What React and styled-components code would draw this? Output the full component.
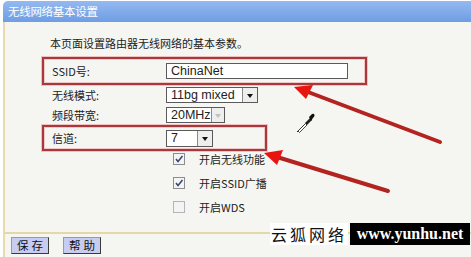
import React from "react";
import styled, { createGlobalStyle } from "styled-components";

const Global = createGlobalStyle`
  html, body { margin: 0; padding: 0; background: #ffffff; }
  body { font-family: "Noto Sans CJK SC", "Noto Sans", sans-serif; }
  * { box-sizing: border-box; }
`;

const Page = styled.div`
  position: relative;
  width: 471px;
  height: 257px;
  overflow: hidden;
  display: flex;
  flex-direction: column;
  background: #ffffff;
`;

const TitleBar = styled.div`
  height: 21px;
  margin: 1px 0 0 3px;
  border-radius: 5px 0 0 0;
  background: linear-gradient(#93b9f0, #6f9de4);
  color: #ffffff;
  font-size: 11.5px;
  line-height: 21px;
  padding-left: 5px;
  letter-spacing: -0.3px;
`;

const Body = styled.div`
  flex: 1;
  margin-left: 3px;
  border-left: 2px solid #e6dcae;
  background: #f5f5f2;
  display: flex;
  flex-direction: column;
  padding: 14px 0 0 37px;
`;

const Description = styled.div`
  font-size: 11px;
  line-height: 14px;
  color: #222;
  padding-left: 8px;
  margin-bottom: 7px;
`;

const Row = styled.div`
  display: flex;
  align-items: center;
  height: ${(p) => p.$h}px;
  width: ${(p) => (p.$w ? `${p.$w}px` : "auto")};
  padding-left: ${(p) => (p.$boxed ? 8 : 10)}px;
  border: ${(p) => (p.$boxed ? "2px solid #a8383c" : "none")};
  box-shadow: ${(p) => (p.$boxed ? "0 0 0 1px #efc2c2, inset 0 0 0 1px #efc8c8" : "none")};
`;

const Label = styled.div`
  width: 114px;
  font-size: 11px;
  color: #222;
  flex-shrink: 0;
`;

const TextInput = styled.input`
  width: 182px;
  height: 16px;
  border: 1px solid #5a5a5a;
  background: #fff;
  padding: 0 0 0 4px;
  font-family: "Liberation Sans", Arial, sans-serif;
  font-size: 12.5px;
  color: #222;
  outline: none;
`;

const Select = styled.div`
  display: flex;
  align-items: stretch;
  width: ${(p) => p.$w}px;
  height: ${(p) => p.$h || 16}px;
  border: 1px solid #5a5a5a;
  background: #fff;
`;

const SelectText = styled.div`
  flex: 1;
  padding-left: 4px;
  font-family: "Liberation Sans", Arial, sans-serif;
  font-size: 12.5px;
  line-height: ${(p) => p.$h - 2}px;
  color: #222;
  white-space: nowrap;
`;

const SelectButton = styled.div`
  width: 15px;
  display: flex;
  align-items: center;
  justify-content: center;
  border-left: 1px solid #8a8a8a;
  background: #eeeeec;
  &::after {
    content: "";
    border-left: 3.5px solid transparent;
    border-right: 3.5px solid transparent;
    border-top: 4px solid ${(p) => (p.$disabled ? "#c0c0c0" : "#111")};
    margin-top: 2px;
  }
`;

const Checks = styled.div`
  display: flex;
  flex-direction: column;
  gap: 10px;
  padding-left: 131px;
  margin-top: 1px;
`;

const CheckRow = styled.div`
  display: flex;
  align-items: center;
  height: 14px;
  gap: 14px;
  font-size: 11px;
  color: #222;
`;

const Box = styled.div`
  width: 12px;
  height: 12px;
  border: 1px solid ${(p) => (p.$checked ? "#8d8d8d" : "#b5b5b5")};
  background: #f4f4f4;
  display: flex;
  align-items: center;
  justify-content: center;
`;

const Footer = styled.div`
  height: 25px;
  margin-left: 3px;
  border-left: 2px solid #e6dcae;
  border-top: 2px solid #e3d8a6;
  background: #f5f5f2;
  display: flex;
  align-items: center;
  gap: 14px;
  padding-left: 6px;
`;

const Button = styled.div`
  width: 38px;
  height: 17px;
  background: #c6cdf1;
  border: 1px solid #3a3a3a;
  border-top-color: #9a9a9a;
  border-left-color: #9a9a9a;
  font-size: 11.5px;
  line-height: 15px;
  text-align: center;
  letter-spacing: 3px;
  padding-left: 3px;
  color: #111;
`;

const Overlay = styled.svg`
  position: absolute;
  left: 0;
  top: 0;
  pointer-events: none;
`;

const Watermark = styled.div`
  position: absolute;
  left: 270px;
  top: 223px;
  height: 22px;
  display: flex;
  gap: 2px;
`;

const WmCn = styled.div`
  width: 78px;
  background: #fff;
  color: #111;
  font-family: "Noto Sans CJK SC", serif;
  font-size: 16px;
  line-height: 22px;
  letter-spacing: 3px;
  text-align: center;
`;

const WmEn = styled.div`
  width: 120px;
  background: #000;
  color: #fff;
  font-family: "Liberation Serif", serif;
  font-weight: bold;
  font-size: 16px;
  line-height: 22px;
  text-align: center;
`;

const Tick = () => (
  <svg width="10" height="10" viewBox="0 0 10 10">
    <path d="M2 5 L4 7.5 L8.5 2" fill="none" stroke="#3b4778" strokeWidth="1.6" />
  </svg>
);

export default function App() {
  return (
    <>
      <Global />
      <Page>
        <TitleBar>无线网络基本设置</TitleBar>
        <Body>
          <Description>本页面设置路由器无线网络的基本参数。</Description>
          <Row $boxed $h={28} $w={325}>
            <Label>SSID号:</Label>
            <TextInput readOnly value="ChinaNet" />
          </Row>
          <Row $h={20}>
            <Label>无线模式:</Label>
            <Select $w={92}>
              <SelectText $h={16}>11bg mixed</SelectText>
              <SelectButton />
            </Select>
          </Row>
          <Row $h={20}>
            <Label>频段带宽:</Label>
            <Select $w={59}>
              <SelectText $h={16}>20MHz</SelectText>
              <SelectButton $disabled />
            </Select>
          </Row>
          <Row $boxed $h={26} $w={225}>
            <Label>信道:</Label>
            <Select $w={47} $h={17}>
              <SelectText $h={17}>7</SelectText>
              <SelectButton />
            </Select>
          </Row>
          <Checks>
            <CheckRow>
              <Box $checked><Tick /></Box>
              开启无线功能
            </CheckRow>
            <CheckRow>
              <Box $checked><Tick /></Box>
              开启SSID广播
            </CheckRow>
            <CheckRow>
              <Box />
              开启WDS
            </CheckRow>
          </Checks>
        </Body>
        <Footer>
          <Button>保存</Button>
          <Button>帮助</Button>
        </Footer>

        <Overlay width="471" height="257" viewBox="0 0 471 257">
          <g stroke="#b3231f" strokeWidth="4" strokeLinecap="round">
            <line x1="308" y1="92" x2="440" y2="142" />
            <line x1="277" y1="157" x2="388" y2="191" />
          </g>
          <polygon points="294,87 313,85 306,99" fill="#e8140f" />
          <polygon points="264,153 283,150 277,165" fill="#e8140f" />
          <g transform="translate(296 113)">
            <path d="M1 19 L9 11" stroke="#222" strokeWidth="1" />
            <path d="M2 18 L9.5 10.5 L11 12 L3.5 19.5 Z" fill="#fff" stroke="#222" strokeWidth="0.8" />
            <path d="M9 10 L14 5 L16 7 L11 12 Z" fill="#222" />
            <path d="M13 4 L16 1 Q18 0 18.5 2 Q19 3 17 5 L15 8 Z" fill="#111" />
          </g>
        </Overlay>

        <Watermark>
          <WmCn>云狐网络</WmCn>
          <WmEn>www.yunhu.net</WmEn>
        </Watermark>
      </Page>
    </>
  );
}
